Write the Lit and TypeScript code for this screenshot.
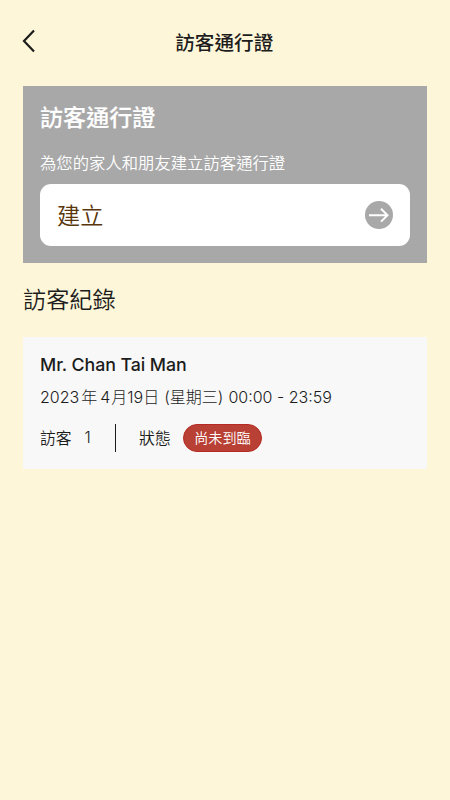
import { LitElement, html, css } from "lit";
import { customElement } from "lit/decorators.js";

@customElement("app-root")
export class AppRoot extends LitElement {
  static styles = css`
    :host {
      display: block;
      box-sizing: border-box;
      height: 800px;
      overflow: hidden;
      background: #fef6d8;
      color: #1c1c1c;
      font-family: Inter, "Noto Sans CJK TC", sans-serif;
      white-space: nowrap;
    }
    svg { display: block; }
    .bar {
      display: grid;
      grid-template-columns: 1fr auto 1fr;
      align-items: center;
      height: 86px;
      box-sizing: border-box;
      padding: 0 22.5px 2px 21px;
    }
    .bar svg { margin-top: -2px; }
    .title { padding-top: 2px; font-size: 19.6px; font-weight: 500; line-height: 28px; }
    .banner {
      margin: 0 23px;
      height: 177px;
      box-sizing: border-box;
      padding: 15px 17px 0;
      background: #a8a8a8;
      color: #fff;
    }
    .heading { font-size: 23.1px; font-weight: 500; line-height: 34px; -webkit-text-stroke: 0.2px #fff; }
    .sub { margin-top: 16px; font-size: 16.35px; font-weight: 350; line-height: 24px; }
    .create {
      display: flex;
      align-items: center;
      justify-content: space-between;
      box-sizing: border-box;
      height: 62px;
      margin-top: 9px;
      padding: 0 17px;
      border-radius: 11px;
      background: #fff;
      color: #59360b;
      font-size: 23.2px;
      font-weight: 350;
    }
    .create span { padding-bottom: 2px; }
    .section {
      margin: 20px 23px 0;
      font-size: 23.2px;
      font-weight: 350;
      line-height: 34px;
    }
    .card {
      margin: 20px 23px 0;
      height: 132px;
      box-sizing: border-box;
      padding: 15px 17px 0;
      background: #f8f8f8;
    }
    .name { font-size: 17.8px; font-weight: 450; line-height: 26px; letter-spacing: -0.08px; }
    .date { display: flex; margin-top: 7px; font-size: 16px; font-weight: 300; line-height: 24px; }
    .year { margin: 0 1px 0 2px; }
    .wide { margin-left: 5px; }
    .meta { display: flex; align-items: center; margin-top: 15px; height: 28px; font-size: 15.8px; font-weight: 350; }
    .meta span:not(.rule):not(.pill) { padding-bottom: 1px; }
    .meta .count { width: 9px; margin-left: 13px; padding: 0; }
    .rule { width: 1.5px; height: 28px; margin: 0 23px 0 21px; background: #1c1c1c; }
    .pill {
      display: flex;
      align-items: center;
      justify-content: center;
      width: 79.5px;
      height: 28px;
      box-sizing: border-box;
      margin-left: 12px;
      padding-bottom: 2px;
      border: 1px solid #b72a24;
      border-radius: 14px;
      background: #b84034;
      color: #fff;
      font-size: 14.1px;
      font-weight: 350;
    }
  `;

  render() {
    return html`
      <header class="bar">
        <svg width="14" height="24" viewBox="0 0 14 24" fill="none" stroke="#1c1c1c" stroke-width="2.2">
          <path d="M13 1.5 3 12 13 22.5" />
        </svg>
        <div class="title">訪客通行證</div>
      </header>
      <section class="banner">
        <div class="heading">訪客通行證</div>
        <div class="sub">為您的家人和朋友建立訪客通行證</div>
        <div class="create">
          <span>建立</span>
          <svg width="28" height="28" viewBox="0 0 28 28" fill="none" stroke="#fff" stroke-width="2">
            <circle cx="14" cy="14" r="14" fill="#a8a8a8" stroke="none" />
            <path d="M4 14.2H22.5M16 7.8 22.5 14.2 16 20.6" />
          </svg>
        </div>
      </section>
      <div class="section">訪客紀錄</div>
      <section class="card">
        <div class="name">Mr. Chan Tai Man</div>
        <div class="date">
          <span>2023</span><span class="year">年</span><span class="year">4</span><span>月</span><span>19</span><span>日</span><span class="wide">(星期三)</span><span class="wide">00:00 - 23:59</span>
        </div>
        <div class="meta">
          <span>訪客</span><span class="count">1</span><span class="rule"></span><span>狀態</span><span class="pill">尚未到臨</span>
        </div>
      </section>
    `;
  }
}
